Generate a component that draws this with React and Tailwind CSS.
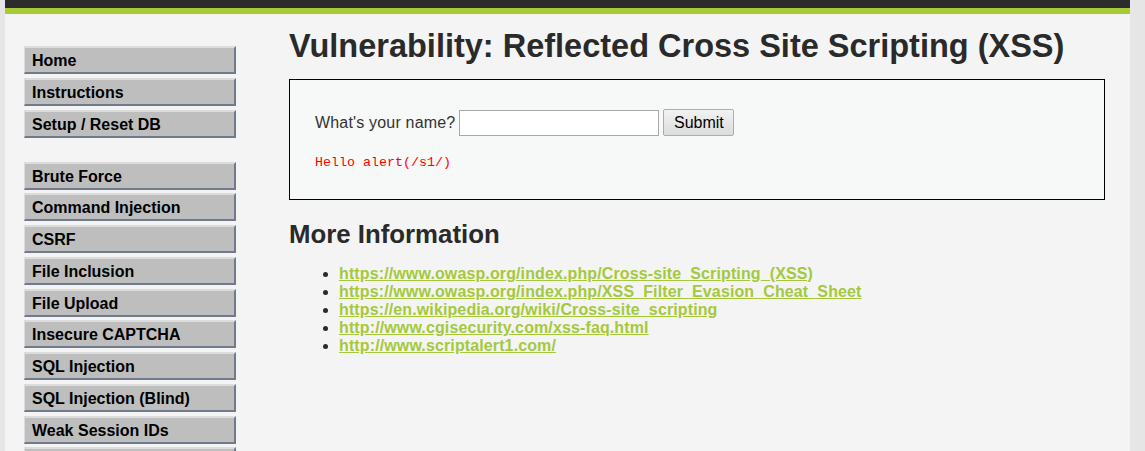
import React from 'react';

const menuGroups = [
    ['Home', 'Instructions', 'Setup / Reset DB'],
    ['Brute Force', 'Command Injection', 'CSRF', 'File Inclusion', 'File Upload', 'Insecure CAPTCHA', 'SQL Injection', 'SQL Injection (Blind)', 'Weak Session IDs', 'XSS (DOM)'],
];

const links = [
    'https://www.owasp.org/index.php/Cross-site_Scripting_(XSS)',
    'https://www.owasp.org/index.php/XSS_Filter_Evasion_Cheat_Sheet',
    'https://en.wikipedia.org/wiki/Cross-site_scripting',
    'http://www.cgisecurity.com/xss-faq.html',
    'http://www.scriptalert1.com/',
];

const MenuItem = ({ label }) => (
    <li>
        <a
            href="#"
            className="block h-[28px] leading-[25px] pl-[7px] bg-[#bebebe] border-t-2 border-l border-r-2 border-b-2 border-t-[#dcdcdc] border-l-[#dcdcdc] border-r-[#6f7a8b] border-b-[#6f7a8b] text-black font-bold text-[16px] no-underline"
        >
            {label}
        </a>
    </li>
);

const App = () => {
    return (
        <div className="w-full h-[451px] overflow-hidden bg-[#e6e6e6] font-['Liberation_Sans',Arial,sans-serif]">
            <div className="ml-[5px] w-[1125px] h-full bg-[#f4f4f4] flex flex-col">
                {/* header strip */}
                <div className="h-[8px] shrink-0 bg-[#2c2c2c]" />
                <div className="h-[6px] shrink-0 bg-[#a6cb37]" />

                <div className="flex shrink-0">
                    {/* side menu */}
                    <div className="w-[284px] pl-[19px] pt-[32px]">
                        <div className="w-[212px] flex flex-col gap-[24px]">
                            {menuGroups.map((group, i) => (
                                <ul key={i} className="flex flex-col gap-[3.75px]">
                                    {group.map((item) => (
                                        <MenuItem key={item} label={item} />
                                    ))}
                                </ul>
                            ))}
                        </div>
                    </div>

                    {/* main body */}
                    <div className="flex-1 pr-[25px] pt-[7px] text-[#2a2a2a]">
                        <h1 className="text-[32.5px] leading-[50px] font-bold m-0">
                            Vulnerability: Reflected Cross Site Scripting (XSS)
                        </h1>

                        <div className="mt-[8px] w-[816px] h-[121px] border border-black bg-[#f7f8f8] pl-[25px] pt-[29px]">
                            <form className="flex items-center text-[16px] text-[#333]" onSubmit={(e) => e.preventDefault()}>
                                <span className="tracking-[0.18px]">What's your name?</span>
                                <input
                                    type="text"
                                    className="ml-[4px] w-[200px] h-[26px] bg-white border border-[#a9a9a9] outline-none px-1"
                                />
                                <button
                                    type="submit"
                                    className="ml-[4px] w-[71px] h-[27px] border border-[#adadad] rounded-[2px] bg-gradient-to-b from-[#f2f2f2] to-[#dcdcdc] text-[16px] text-black"
                                >
                                    Submit
                                </button>
                            </form>
                            <pre className="mt-[18px] text-[13.33px] leading-[18px] text-[#ff0000] font-['Liberation_Mono',monospace]">Hello alert(/s1/)</pre>
                        </div>

                        <h2 className="mt-[19px] text-[25.8px] leading-[30px] font-bold">More Information</h2>

                        <ul className="mt-[16px] pl-[50px] list-disc text-[16px] leading-[18px] font-bold tracking-[0.12px] marker:text-[#2a2a2a]">
                            {links.map((l) => (
                                <li key={l}>
                                    <a href="#" className="text-[#a4c93a] underline">{l}</a>
                                </li>
                            ))}
                        </ul>
                    </div>
                </div>
            </div>
        </div>
    );
};

export default App;
